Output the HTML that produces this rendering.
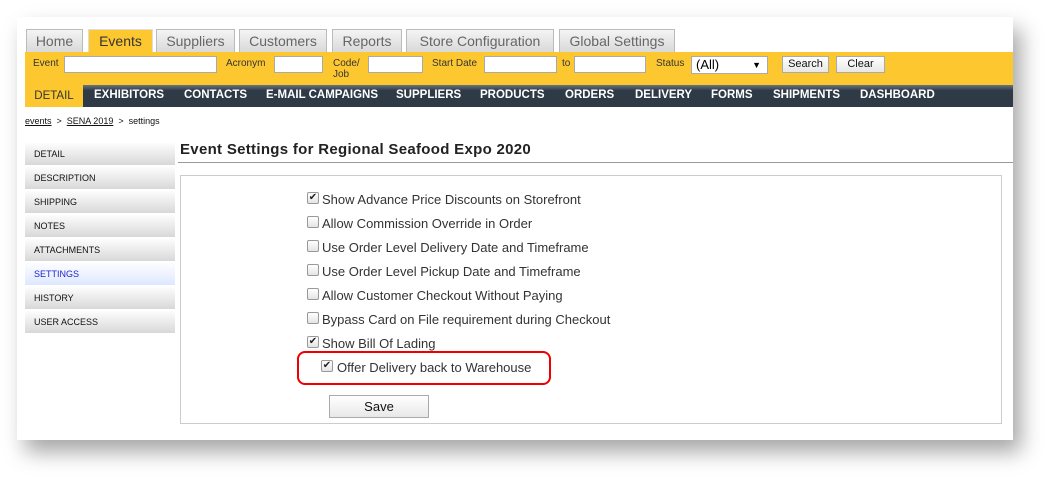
<!DOCTYPE html>
<html><head><style>
body{margin:0;width:1061px;height:488px;background:#fff;font-family:"Liberation Sans",Arial,sans-serif;position:relative;overflow:hidden}
.card{position:absolute;left:17px;top:17px;width:996px;height:423px;background:#fff;box-shadow:8px 12px 20px rgba(0,0,0,.35)}
.a{position:absolute}
.tab{position:absolute;top:29px;height:23px;border:1px solid #bbb;border-bottom:none;background:linear-gradient(#f4f4f4,#d9d9d9);color:#666;font-size:14px;line-height:23px;text-align:center;box-sizing:border-box}
.tab.on{background:#fdc82f;color:#333;border-color:#ddd}
.yb{left:25px;top:52px;width:988px;height:33px;background:#fdc82f}
.lbl{position:absolute;font-size:10px;color:#333}
.inp{position:absolute;height:17px;background:#fff;border:1px solid #aaa;box-sizing:border-box}
.btn{position:absolute;height:17px;border:1px solid #aaa;background:linear-gradient(#fff,#e8e8e8);font-size:11px;line-height:15px;text-align:center;box-sizing:border-box;color:#111}
.nav{left:25px;top:85px;width:988px;height:22px;background:linear-gradient(#6a747d 0,#2e3b47 25%,#2e3b47)}
.nav span{position:absolute;top:4px;color:#fff;font-size:11.5px;font-weight:bold}
.side{position:absolute;left:25px;width:150px;height:22px;background:linear-gradient(#fdfdfd,#d8d8d8);font-size:9px;line-height:22px;padding-left:9px;box-sizing:border-box;color:#111}
.cb{position:absolute;left:307px;width:10px;height:10px;border:1px solid #999;border-radius:2px;background:linear-gradient(#fff,#e4e4e4);font-size:10px;line-height:9px;text-align:center;color:#222}
.t{position:absolute;left:322px;font-size:13px;color:#333}
</style></head><body>
<div class="card"></div>
<div class="tab" style="left:26px;width:57px">Home</div>
<div class="tab on" style="left:88px;width:65px">Events</div>
<div class="tab" style="left:156px;width:79px">Suppliers</div>
<div class="tab" style="left:239px;width:88px">Customers</div>
<div class="tab" style="left:332px;width:70px">Reports</div>
<div class="tab" style="left:406px;width:148px">Store Configuration</div>
<div class="tab" style="left:559px;width:116px">Global Settings</div>
<div class="a yb"></div>
<div class="lbl" style="left:33px;top:58px">Event</div><div class="inp" style="left:64px;top:56px;width:153px"></div>
<div class="lbl" style="left:226px;top:58px">Acronym</div><div class="inp" style="left:274px;top:56px;width:49px"></div>
<div class="lbl" style="left:333px;top:58px;line-height:11px">Code/<br>Job</div><div class="inp" style="left:368px;top:56px;width:55px"></div>
<div class="lbl" style="left:432px;top:58px">Start Date</div><div class="inp" style="left:484px;top:56px;width:73px"></div>
<div class="lbl" style="left:562px;top:58px">to</div><div class="inp" style="left:574px;top:56px;width:72px"></div>
<div class="lbl" style="left:656px;top:58px">Status</div>
<div class="inp" style="left:691px;top:56px;width:77px;height:18px;font-size:13px;padding-left:4px;line-height:16px">(All)<span style="position:absolute;right:6px;font-size:9px">▼</span></div>
<div class="btn" style="left:782px;top:56px;width:47px">Search</div>
<div class="btn" style="left:836px;top:56px;width:49px">Clear</div>
<div class="a nav">
<span style="left:0;top:0;width:58px;height:22px;background:#fdc82f;color:#333;font-weight:normal;line-height:22px;text-align:center">DETAIL</span>
<span style="left:69px">EXHIBITORS</span><span style="left:159px">CONTACTS</span><span style="left:241px">E-MAIL CAMPAIGNS</span>
<span style="left:371px">SUPPLIERS</span><span style="left:455px">PRODUCTS</span><span style="left:540px">ORDERS</span>
<span style="left:610px">DELIVERY</span><span style="left:686px">FORMS</span><span style="left:748px">SHIPMENTS</span><span style="left:835px">DASHBOARD</span>
</div>
<div class="a" style="left:25px;top:116px;font-size:9px;color:#111"><u>events</u> &nbsp;&gt;&nbsp; <u>SENA 2019</u> &nbsp;&gt;&nbsp; settings</div>
<div class="side" style="top:143px">DETAIL</div>
<div class="side" style="top:167px">DESCRIPTION</div>
<div class="side" style="top:191px">SHIPPING</div>
<div class="side" style="top:215px">NOTES</div>
<div class="side" style="top:239px">ATTACHMENTS</div>
<div class="side" style="top:263px;background:linear-gradient(#fdfdff,#dde8ff);color:#22c">SETTINGS</div>
<div class="side" style="top:287px">HISTORY</div>
<div class="side" style="top:311px">USER ACCESS</div>
<div class="a" style="left:180px;top:141px;font-size:15px;font-weight:bold;color:#222;letter-spacing:.3px">Event Settings for Regional Seafood Expo 2020</div>
<div class="a" style="left:178px;top:162px;width:835px;height:1px;background:#999"></div>
<div class="a" style="left:180px;top:175px;width:822px;height:249px;border:1px solid #ccc;box-sizing:border-box"></div>
<div class="cb" style="top:192px">✔</div><div class="t" style="top:192px">Show Advance Price Discounts on Storefront</div>
<div class="cb" style="top:216px"></div><div class="t" style="top:216px">Allow Commission Override in Order</div>
<div class="cb" style="top:240px"></div><div class="t" style="top:240px">Use Order Level Delivery Date and Timeframe</div>
<div class="cb" style="top:264px"></div><div class="t" style="top:264px">Use Order Level Pickup Date and Timeframe</div>
<div class="cb" style="top:288px"></div><div class="t" style="top:288px">Allow Customer Checkout Without Paying</div>
<div class="cb" style="top:312px"></div><div class="t" style="top:312px">Bypass Card on File requirement during Checkout</div>
<div class="cb" style="top:336px">✔</div><div class="t" style="top:336px">Show Bill Of Lading</div>
<div class="cb" style="top:360px;left:321px">✔</div><div class="t" style="top:360px;left:337px">Offer Delivery back to Warehouse</div>
<div class="a" style="left:297px;top:351px;width:254px;height:34px;border:2px solid #e00;border-radius:8px;box-sizing:border-box"></div>
<div class="btn" style="left:329px;top:395px;width:100px;height:23px;font-size:13px;line-height:21px">Save</div>
</body></html>
